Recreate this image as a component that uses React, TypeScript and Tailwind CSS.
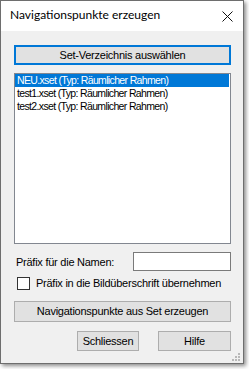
export default function App() {
  const items = [
    "NEU.xset (Typ: Räumlicher Rahmen)",
    "test1.xset (Typ: Räumlicher Rahmen)",
    "test2.xset (Typ: Räumlicher Rahmen)",
  ];

  return (
    <div className="w-[249px] h-[369px] bg-white">
      <div className="relative w-[244px] h-[364px] flex flex-col border border-[#6e6e6e] shadow-[2px_2px_4px_rgba(0,0,0,0.45)] font-['Liberation_Sans',Arial,sans-serif] text-[11px] tracking-[-0.25px] text-black">
        {/* title bar */}
        <div className="h-[30px] bg-white flex items-center justify-between pl-[9px] pr-[9px] tracking-normal">
          <span className="font-['Lato',sans-serif] text-[12px] leading-none pb-[2px]">
            Navigationspunkte erzeugen
          </span>
          <svg width="11" height="11" viewBox="0 0 11 11" className="mr-[1px]">
            <path d="M0.5 0.5 L10.5 10.5 M10.5 0.5 L0.5 10.5" stroke="#111" strokeWidth="1" />
          </svg>
        </div>

        {/* body */}
        <div className="flex-1 bg-[#f0f0f0] flex flex-col pl-[13px] pr-[12px] pt-[14px]">
          <button className="h-[20px] border-2 border-[#0078d7] bg-[#e1e1e1] flex items-center justify-center leading-none">
            Set-Verzeichnis auswählen
          </button>

          <div className="mt-[8px] h-[171px] border border-[#828790] bg-white pr-[1px] text-[10.5px] tracking-[-0.65px]">
            {items.map((item, i) => (
              <div
                key={item}
                className={`h-[13px] leading-[13px] pl-[2px] whitespace-nowrap ${
                  i === 0 ? "bg-[#0078d7] text-white" : ""
                }`}
              >
                {item}
              </div>
            ))}
          </div>

          <div className="mt-[8px] flex items-center justify-between">
            <span className="pl-[2px] pt-[2px]">Präfix für die Namen:</span>
            <div className="w-[98px] h-[19px] border border-[#7a7a7a] bg-white" />
          </div>

          <label className="mt-[6px] flex items-center gap-[6px] pl-[3px] h-[13px] whitespace-nowrap">
            <span className="w-[13px] h-[13px] border border-[#333] bg-white shrink-0" />
            <span>Präfix in die Bildüberschrift übernehmen</span>
          </label>

          <button className="mt-[11px] h-[21px] border border-[#adadad] bg-[#e1e1e1] flex items-center justify-center leading-none">
            Navigationspunkte aus Set erzeugen
          </button>

          <div className="mt-[9px] flex justify-end gap-[19px]">
            <button className="w-[62px] h-[20px] border border-[#adadad] bg-[#e1e1e1] flex items-center justify-center leading-none">
              Schliessen
            </button>
            <button className="w-[73px] h-[20px] border border-[#adadad] bg-[#e1e1e1] flex items-center justify-center leading-none">
              Hilfe
            </button>
          </div>
        </div>

        {/* size grip */}
        <svg width="9" height="9" viewBox="0 0 9 9" className="absolute right-[2px] bottom-[1px]">
          <rect x="6" y="0" width="2" height="2" fill="#b8b8b8" />
          <rect x="3" y="3" width="2" height="2" fill="#b8b8b8" />
          <rect x="6" y="3" width="2" height="2" fill="#b8b8b8" />
          <rect x="0" y="6" width="2" height="2" fill="#b8b8b8" />
          <rect x="3" y="6" width="2" height="2" fill="#b8b8b8" />
          <rect x="6" y="6" width="2" height="2" fill="#b8b8b8" />
        </svg>
      </div>
    </div>
  );
}
